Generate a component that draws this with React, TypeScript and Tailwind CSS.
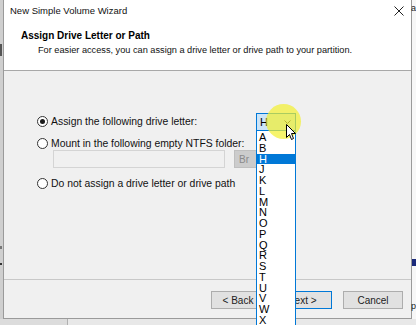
import React from "react";

const letters = ["A","B","H","J","K","L","M","N","O","P","Q","R","S","T","U","V","W","X"];

function Radio({ checked }: { checked?: boolean }) {
  return (
    <span className="w-[11px] h-[11px] rounded-full border border-[#333333] bg-white flex items-center justify-center shrink-0">
      {checked && <span className="w-[5px] h-[5px] rounded-full bg-[#1a1a1a]" />}
    </span>
  );
}

function Btn({ children, def, className }: { children: React.ReactNode; def?: boolean; className?: string }) {
  return (
    <div
      className={
        "h-[18px] flex items-center justify-center text-[10px] text-[#222] bg-[#e1e1e1] border " +
        (def ? "border-[#0078d7] " : "border-[#adadad] ") +
        (className ?? "")
      }
    >
      {children}
    </div>
  );
}

export default function App() {
  return (
    <div
      className="w-[416px] h-[325px] overflow-hidden relative bg-[#e6e6e6] flex flex-col"
      style={{ fontFamily: '"Liberation Sans", Arial, sans-serif' }}
    >
      <div className="flex h-[319px]">
        {/* left background strip */}
        <div className="w-[3px] bg-[#cfcfcf] flex flex-col">
          <div className="h-[44px]" />
          <div className="h-[12px] w-[2px] bg-[#555]" />
          <div className="h-[190px]" />
          <div className="h-[3px] w-[2px] bg-[#777]" />
          <div className="h-[14px]" />
          <div className="h-[2px] w-[2px] bg-[#333]" />
        </div>

        {/* dialog */}
        <div className="w-[409px] h-[319px] border-l border-r border-b border-[#9a9a9a] flex flex-col bg-[#f0f0f0]">
          {/* title bar */}
          <div className="h-[21px] bg-white flex items-center justify-between pl-[6px] pr-[6px]">
            <span className="text-[9.5px] text-[#111] leading-none">New Simple Volume Wizard</span>
            <svg width="10" height="10" viewBox="0 0 10 10" className="mr-[1px]">
              <path d="M0.5 0.5 L9.5 9.5 M9.5 0.5 L0.5 9.5" stroke="#222" strokeWidth="1" />
            </svg>
          </div>
          {/* header */}
          <div className="h-[50px] bg-white border-b border-[#a8a8a8] flex flex-col pl-[17px] pt-[9px]">
            <span className="text-[10px] font-bold text-black leading-[12px]">Assign Drive Letter or Path</span>
            <span className="text-[9.2px] text-[#111] leading-[12px] pl-[17px] mt-[2px]">
              For easier access, you can assign a drive letter or drive path to your partition.
            </span>
          </div>
          {/* body */}
          <div className="h-[209px] border-b border-[#c8c8c8] flex flex-col pl-[33px] pt-[42px] text-[10.4px] text-[#111]">
            <div className="flex items-center h-[18px]">
              <div className="w-[219px] flex items-center gap-[3px]">
                <Radio checked />
                <span>Assign the following drive letter:</span>
              </div>
              <div className="w-[40px] h-[18px] bg-[#cce4f7] border border-[#0078d7] flex items-center justify-between pl-[3px] pr-[4px]">
                <span className="text-[11px] text-black">H</span>
                <svg width="7" height="4" viewBox="0 0 7 4">
                  <path d="M0.5 0.5 L3.5 3.5 L6.5 0.5" stroke="#333" fill="none" />
                </svg>
              </div>
            </div>
            <div className="flex items-center gap-[3px] h-[13px] mt-[6px]">
              <Radio />
              <span>Mount in the following empty NTFS folder:</span>
            </div>
            <div className="flex items-center h-[18px] pl-[16px]">
              <div className="w-[172px] h-[18px] border border-[#d4d4d4] bg-[#f0f0f0]" />
              <div className="w-[58px] h-[18px] ml-[9px] bg-[#cccccc] border border-[#bfbfbf] flex items-center pl-[4px] text-[10px] text-[#8a8a8a] overflow-hidden">
                <span className="w-[14px] overflow-hidden whitespace-nowrap">Br</span>
              </div>
            </div>
            <div className="flex items-center gap-[3px] h-[13px] mt-[9px]">
              <Radio />
              <span>Do not assign a drive letter or drive path</span>
            </div>
          </div>
          {/* footer */}
          <div className="flex-1 flex justify-end pt-[11px] pr-[8px]">
            <Btn className="w-[60px] pr-[6px]">&lt; Back</Btn>
            <Btn def className="w-[60px] ml-[1px]">Next &gt;</Btn>
            <Btn className="w-[60px] ml-[11px]">Cancel</Btn>
          </div>
        </div>

        {/* right background strip */}
        <div className="flex-1 bg-[#f7f7f7] flex flex-col text-[9px] text-[#222] leading-none">
          <span className="mt-[4px] -ml-[1px]">a</span>
          <div className="h-[246px]" />
          <div className="h-[7px] bg-[#1b2a7a]" />
          <div className="h-[36px]" />
          <span className="-ml-[1px]">p</span>
        </div>
      </div>
      {/* bottom background */}
      <div className="flex-1 flex">
        <div className="w-[68px] border-r border-[#b0b0b0] bg-[#dcdcdc]" />
        <div className="flex-1 bg-[#e8e8e8]" />
      </div>

      {/* dropdown list overlay */}
      <div className="absolute left-[256px] top-[131px] w-[40px] h-[200px] bg-white border border-[#0078d7] border-t-0 flex flex-col pt-[1px]">
        {letters.map((l) => (
          <div
            key={l}
            className={
              "h-[10.75px] leading-[10.75px] text-[11px] pl-[2px] " +
              (l === "H" ? "bg-[#0078d7] text-white" : "text-black")
            }
          >
            {l}
          </div>
        ))}
      </div>

      {/* cursor highlight */}
      <div className="absolute left-[266px] top-[104px] w-[35px] h-[35px] rounded-full bg-[#f2ef2e] opacity-70" />
      {/* cursor */}
      <svg className="absolute left-[286px] top-[124px]" width="12" height="18" viewBox="0 0 12 18">
        <path d="M0.5 0.5 L0.5 13.5 L3.5 10.5 L5.5 15.5 L7.5 14.5 L5.5 9.5 L9.5 9.5 Z" fill="white" stroke="black" strokeWidth="1" strokeLinejoin="round" />
      </svg>
    </div>
  );
}
